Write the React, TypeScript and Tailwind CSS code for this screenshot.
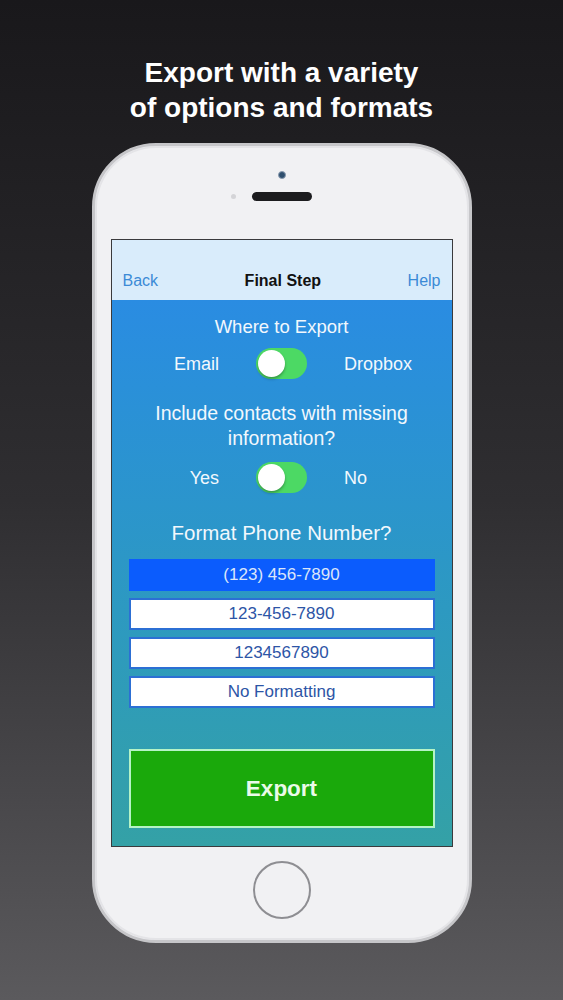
import React, { useState } from 'react';

type Format = '(123) 456-7890' | '123-456-7890' | '1234567890' | 'No Formatting';

const formats: Format[] = ['(123) 456-7890', '123-456-7890', '1234567890', 'No Formatting'];

const Toggle: React.FC<{ on: boolean; onClick: () => void }> = ({ on, onClick }) => (
  <button
    onClick={onClick}
    className={`w-[51px] h-[31px] rounded-full p-[2px] flex items-center transition-colors ${
      on ? 'bg-[#4cd964] justify-start' : 'bg-[#4cd964] justify-end'
    }`}
  >
    <span className="block w-[27px] h-[27px] rounded-full bg-white shadow-[0_2px_3px_rgba(0,0,0,0.3)]" />
  </button>
);

const ToggleRow: React.FC<{ left: string; right: string; on: boolean; onClick: () => void; className?: string }> = ({
  left,
  right,
  on,
  onClick,
  className,
}) => (
  <div className={`flex items-center justify-center gap-[37px] ${className ?? ''}`}>
    <span className="w-[100px] text-right text-[18px] leading-[22px] text-[#f2f8fd]">{left}</span>
    <Toggle on={on} onClick={onClick} />
    <span className="w-[100px] text-left text-[18px] leading-[22px] text-[#f2f8fd]">{right}</span>
  </div>
);

export default function App() {
  const [toEmail, setToEmail] = useState(true);
  const [includeMissing, setIncludeMissing] = useState(true);
  const [format, setFormat] = useState<Format>('(123) 456-7890');

  return (
    <div className="min-h-[1000px] w-full bg-gradient-to-b from-[#19181b] via-[#2f2e31] to-[#5b5a5d] flex flex-col items-center font-['Liberation_Sans',Arial,sans-serif]">
      <h1 className="pt-[55px] text-[28px] leading-[35px] font-bold text-white text-center">
        Export with a variety
        <br />
        of options and formats
      </h1>

      {/* phone body */}
      <div className="mt-[18px] w-[380px] h-[800px] rounded-[64px] bg-[#f1f1f3] border-[3px] border-[#c6c6c9] shadow-[inset_0_0_0_2px_#e4e4e7] px-[16px] flex flex-col items-center">
        <div className="h-[93px] w-full flex flex-col items-center pt-[25px]">
          <div className="w-[8px] h-[8px] rounded-full bg-[#2f4f6e] border border-[#8a9bb0]" />
          <div className="mt-[13px] flex items-center gap-[16px]">
            <div className="w-[5px] h-[5px] rounded-full bg-[#d4d4d7]" />
            <div className="w-[60px] h-[9px] rounded-full bg-[#1c1c1e]" />
            <div className="w-[5px] h-[5px]" />
          </div>
        </div>

        {/* screen */}
        <div className="w-full h-[608px] border border-[#3a3a3c] flex flex-col">
          <div className="h-[60px] bg-[#d9ecfb] flex items-end justify-between px-[11px] pb-[9px] text-[16px] leading-[20px]">
            <button className="text-[#3b8ad6]">Back</button>
            <span className="font-bold text-[#111]">Final Step</span>
            <button className="text-[#3b8ad6]">Help</button>
          </div>

          <div className="flex-1 bg-gradient-to-b from-[#2a8ce2] to-[#34a1a6] flex flex-col items-center">
            <p className="pt-[16px] text-[18.5px] leading-[22px] text-[#f2f8fd]">Where to Export</p>
            <ToggleRow
              className="mt-[10px]"
              left="Email"
              right="Dropbox"
              on={toEmail}
              onClick={() => setToEmail(!toEmail)}
            />

            <p className="mt-[22px] text-[19.5px] leading-[25px] text-[#f2f8fd] text-center">
              Include contacts with missing
              <br />
              information?
            </p>
            <ToggleRow
              className="mt-[11px]"
              left="Yes"
              right="No"
              on={includeMissing}
              onClick={() => setIncludeMissing(!includeMissing)}
            />

            <p className="mt-[28px] text-[20.5px] leading-[24px] text-[#f2f8fd]">Format Phone Number?</p>

            <div className="mt-[14px] w-full px-[17px] flex flex-col gap-[7px]">
              {formats.map((f) => (
                <button
                  key={f}
                  onClick={() => setFormat(f)}
                  className={`h-[32px] w-full text-[17px] ${
                    format === f
                      ? 'bg-[#0b5cfd] text-[#dbe6fa]'
                      : 'bg-white border-2 border-[#2c6fd4] text-[#2d55a6]'
                  }`}
                >
                  {f}
                </button>
              ))}
            </div>

            <div className="mt-[41px] w-full px-[17px]">
              <button className="w-full h-[79px] bg-[#1aa90b] border-2 border-[#b5f3c6] text-[22.5px] font-bold text-[#eafbe9]">
                Export
              </button>
            </div>
          </div>
        </div>

        {/* home button */}
        <div className="mt-[14px] w-[58px] h-[58px] rounded-full border-2 border-[#8e8e92] bg-[#f1f1f3]" />
      </div>
    </div>
  );
}
